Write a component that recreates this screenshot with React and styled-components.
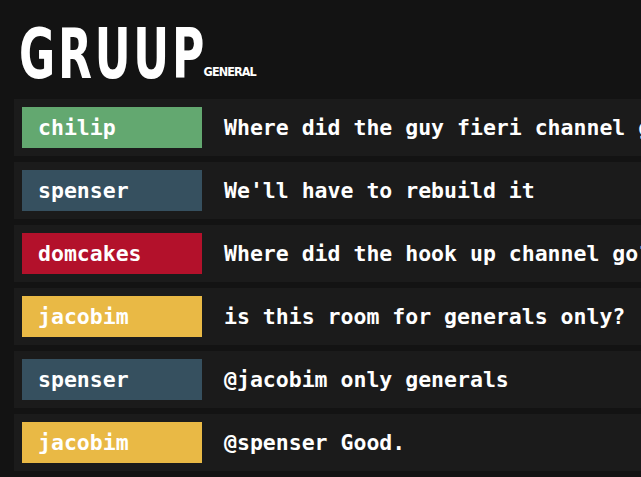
import React from 'react';
import styled, { createGlobalStyle } from 'styled-components';

const GlobalStyle = createGlobalStyle`
  html, body {
    margin: 0;
    padding: 0;
    background: #131313;
    overflow: hidden;
  }
`;

const Page = styled.div`
  padding: 14px 0 0 14px;
  min-height: 100vh;
  box-sizing: border-box;
`;

const Header = styled.header`
  display: flex;
  align-items: baseline;
  padding-left: 5px;
  height: 85px;
`;

// the reference face is a narrow display font; squeeze the condensed one to match
const Logo = styled.h1`
  display: inline-block;
  margin: 5px -84px 0 0;
  font-family: "DejaVu Sans Condensed", sans-serif;
  font-weight: bold;
  font-size: 70px;
  line-height: 70px;
  color: #fff;
  letter-spacing: 4px;
  transform: scaleX(0.7);
  transform-origin: left bottom;
`;

const Room = styled.span`
  font-family: "DejaVu Sans Condensed", sans-serif;
  font-weight: bold;
  font-size: 12.5px;
  letter-spacing: -0.9px;
  color: #fff;
  position: relative;
  top: -2px;
`;

const Messages = styled.ul`
  list-style: none;
  margin: 0;
  padding: 0;
  display: flex;
  flex-direction: column;
  gap: 6px;
`;

const Row = styled.li`
  display: flex;
  align-items: center;
  height: 57px;
  padding-left: 8px;
  background: #1b1b1b;
  white-space: nowrap;
  font-family: "DejaVu Sans Mono", monospace;
  font-weight: bold;
  font-size: 21.5px;
  color: #fff;
`;

const Name = styled.span`
  box-sizing: border-box;
  flex: 0 0 180px;
  height: 41px;
  line-height: 41px;
  padding-left: 16px;
  background: ${p => p.color};
`;

const Text = styled.span`
  margin-left: 22px;
`;

const colors = {
  chilip: '#63a870',
  spenser: '#36505f',
  domcakes: '#b3112b',
  jacobim: '#e9b945',
};

const messages = [
  { user: 'chilip', text: 'Where did the guy fieri channel go?' },
  { user: 'spenser', text: "We'll have to rebuild it" },
  { user: 'domcakes', text: 'Where did the hook up channel go?' },
  { user: 'jacobim', text: 'is this room for generals only?' },
  { user: 'spenser', text: '@jacobim only generals' },
  { user: 'jacobim', text: '@spenser Good.' },
];

export default function App() {
  return (
    <Page>
      <GlobalStyle />
      <Header>
        <Logo>GRUUP</Logo>
        <Room>GENERAL</Room>
      </Header>
      <Messages>
        {messages.map((m, i) => (
          <Row key={i}>
            <Name color={colors[m.user]}>{m.user}</Name>
            <Text>{m.text}</Text>
          </Row>
        ))}
      </Messages>
    </Page>
  );
}
